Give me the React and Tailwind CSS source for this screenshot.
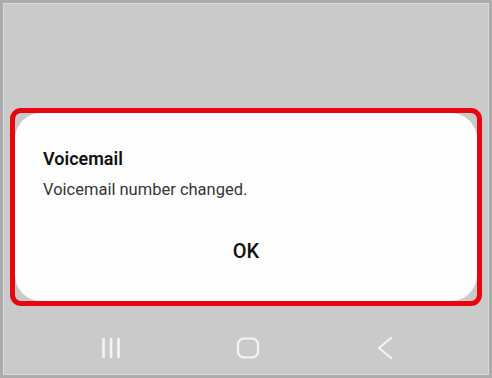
import React from 'react';

const RecentsIcon = () => (
  <svg width="26" height="24" viewBox="0 0 26 24" fill="none">
    <line x1="5.5" y1="2" x2="5.5" y2="22" stroke="#f4f4f4" strokeWidth="2.6" />
    <line x1="13" y1="2" x2="13" y2="22" stroke="#f4f4f4" strokeWidth="2.6" />
    <line x1="20.5" y1="2" x2="20.5" y2="22" stroke="#f4f4f4" strokeWidth="2.6" />
  </svg>
);

const HomeIcon = () => (
  <svg width="26" height="24" viewBox="0 0 26 24" fill="none">
    <rect x="3" y="2.5" width="20" height="19" rx="6" stroke="#f4f4f4" strokeWidth="2.2" />
  </svg>
);

const BackIcon = () => (
  <svg width="26" height="24" viewBox="0 0 26 24" fill="none">
    <path d="M19 2 L7 12 L19 22" stroke="#f4f4f4" strokeWidth="2.2" strokeLinecap="round" strokeLinejoin="round" />
  </svg>
);

const App = () => {
  return (
    <div
      className="w-[492px] h-[378px] border-[3px] border-[#acacac] bg-[#cacaca]"
      style={{ fontFamily: 'Roboto, "Noto Sans", sans-serif' }}
    >
      <div className="h-full border border-[#d9d9d9] flex flex-col">
        {/* Dialog, outlined in red */}
        <div className="mt-[104px] ml-[6px] w-[472px] border-[5px] border-[#e8060e] rounded-[11px]">
          <div className="bg-[#fdfdfe] rounded-[26px] h-[188px] pt-[35px] px-[28px] flex flex-col">
            <h2 className="text-[18px] leading-[21px] font-semibold text-[#111]">Voicemail</h2>
            <p className="mt-[10px] text-[16.5px] leading-[21px] text-[#363636]">
              Voicemail number changed.
            </p>
            <button className="mt-[39px] self-center text-[20px] leading-[24px] font-medium text-[#111]">
              OK
            </button>
          </div>
        </div>

        {/* Navigation bar */}
        <div className="mt-[30px] pl-[4px] flex justify-center">
          <div className="w-[137px] flex justify-center"><RecentsIcon /></div>
          <div className="w-[137px] flex justify-center"><HomeIcon /></div>
          <div className="w-[137px] flex justify-center"><BackIcon /></div>
        </div>
      </div>
    </div>
  );
};

export default App;
